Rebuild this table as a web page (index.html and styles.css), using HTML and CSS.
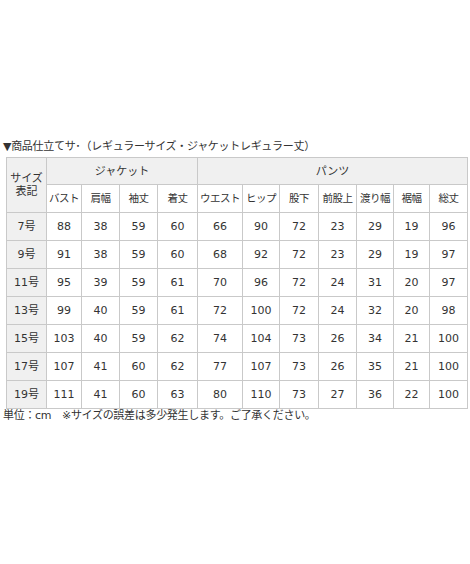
FILE: index.html
```html
<!DOCTYPE html>
<html lang="ja">
<head>
<meta charset="utf-8">
<link rel="stylesheet" href="styles.css">
</head>
<body>
<div class="page">
  <p class="title">▼商品仕立てサ･（レギュラーサイズ・ジャケットレギュラー丈）</p>
  <table class="size-table">
    <colgroup>
      <col class="c40"><col class="c35"><col class="c38"><col class="c38"><col class="c40"><col class="c45"><col class="c37"><col class="c39"><col class="c38"><col class="c37"><col class="c36"><col class="c38">
    </colgroup>
    <tr class="head1">
      <th rowspan="2" class="size-h">サイズ<br>表記</th>
      <th colspan="4">ジャケット</th>
      <th colspan="7">パンツ</th>
    </tr>
    <tr class="head2">
      <td>バスト</td><td>肩幅</td><td>袖丈</td><td>着丈</td><td>ウエスト</td><td>ヒップ</td><td>股下</td><td>前股上</td><td>渡り幅</td><td>裾幅</td><td>総丈</td>
    </tr>
    <tr><th>7号</th><td>88</td><td>38</td><td>59</td><td>60</td><td>66</td><td>90</td><td>72</td><td>23</td><td>29</td><td>19</td><td>96</td></tr>
    <tr><th>9号</th><td>91</td><td>38</td><td>59</td><td>60</td><td>68</td><td>92</td><td>72</td><td>23</td><td>29</td><td>19</td><td>97</td></tr>
    <tr><th>11号</th><td>95</td><td>39</td><td>59</td><td>61</td><td>70</td><td>96</td><td>72</td><td>24</td><td>31</td><td>20</td><td>97</td></tr>
    <tr><th>13号</th><td>99</td><td>40</td><td>59</td><td>61</td><td>72</td><td>100</td><td>72</td><td>24</td><td>32</td><td>20</td><td>98</td></tr>
    <tr><th>15号</th><td>103</td><td>40</td><td>59</td><td>62</td><td>74</td><td>104</td><td>73</td><td>26</td><td>34</td><td>21</td><td>100</td></tr>
    <tr><th>17号</th><td>107</td><td>41</td><td>60</td><td>62</td><td>77</td><td>107</td><td>73</td><td>26</td><td>35</td><td>21</td><td>100</td></tr>
    <tr><th>19号</th><td>111</td><td>41</td><td>60</td><td>63</td><td>80</td><td>110</td><td>73</td><td>27</td><td>36</td><td>22</td><td>100</td></tr>
  </table>
  <p class="note">単位：cm　※サイズの誤差は多少発生します。ご了承ください。</p>
</div>
</body>
</html>
```
FILE: styles.css
```css
html, body {
  margin: 0;
  padding: 0;
  background: #ffffff;
}
body {
  font-family: "DejaVu Sans", "Noto Sans CJK JP", sans-serif;
  color: #333333;
  font-size: 11px;
}
.page {
  padding: 140px 0 0 0;
}
.title {
  margin: 0 0 0 3px;
  font-size: 11px;
  line-height: 14px;
  letter-spacing: -0.3px;
}
.size-table {
  margin: 3px 0 0 6px;
  width: 461px;
  table-layout: fixed;
  border-collapse: collapse;
}
.size-table th,
.size-table td {
  border: 1px solid #c9c9c9;
  padding: 0;
  text-align: center;
  font-weight: normal;
  font-size: 11px;
  height: 27px;
  line-height: 13px;
}
.size-table th {
  background: #f0f0f0;
}
.head1 th { height: 26px; }
.head2 td { font-size: 10.5px; letter-spacing: -0.5px; }
.size-h { line-height: 15px; }
.c40 { width: 40px; }
.c35 { width: 35px; }
.c38 { width: 38px; }
.c45 { width: 45px; }
.c37 { width: 37px; }
.c39 { width: 39px; }
.c36 { width: 36px; }
.note {
  margin: 0 0 0 3px;
  font-size: 11px;
  line-height: 14px;
  letter-spacing: -0.3px;
}
```
